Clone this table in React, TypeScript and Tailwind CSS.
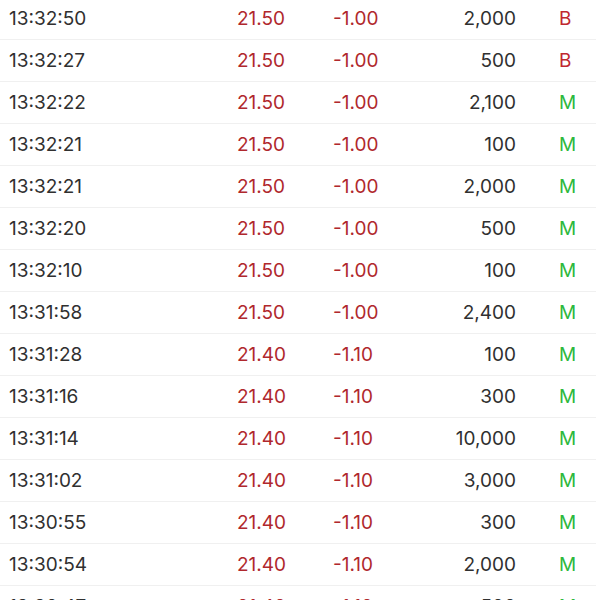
import React from "react";

type Row = { t: string; p: string; c: string; v: string; k: "B" | "M" };

const rows: Row[] = [
  { t: "13:32:50", p: "21.50", c: "-1.00", v: "2,000", k: "B" },
  { t: "13:32:27", p: "21.50", c: "-1.00", v: "500", k: "B" },
  { t: "13:32:22", p: "21.50", c: "-1.00", v: "2,100", k: "M" },
  { t: "13:32:21", p: "21.50", c: "-1.00", v: "100", k: "M" },
  { t: "13:32:21", p: "21.50", c: "-1.00", v: "2,000", k: "M" },
  { t: "13:32:20", p: "21.50", c: "-1.00", v: "500", k: "M" },
  { t: "13:32:10", p: "21.50", c: "-1.00", v: "100", k: "M" },
  { t: "13:31:58", p: "21.50", c: "-1.00", v: "2,400", k: "M" },
  { t: "13:31:28", p: "21.40", c: "-1.10", v: "100", k: "M" },
  { t: "13:31:16", p: "21.40", c: "-1.10", v: "300", k: "M" },
  { t: "13:31:14", p: "21.40", c: "-1.10", v: "10,000", k: "M" },
  { t: "13:31:02", p: "21.40", c: "-1.10", v: "3,000", k: "M" },
  { t: "13:30:55", p: "21.40", c: "-1.10", v: "300", k: "M" },
  { t: "13:30:54", p: "21.40", c: "-1.10", v: "2,000", k: "M" },
  { t: "13:30:47", p: "21.40", c: "-1.10", v: "500", k: "M" },
];

export default function App() {
  return (
    <div className="w-[600px] h-[600px] overflow-hidden bg-white [font-family:Inter,'Liberation_Sans',sans-serif] text-[19px] text-[#303030]">
      <div className="-mt-[2px] flex flex-col">
        {rows.map((r, i) => (
          <div
            key={i}
            className="flex items-center h-[42px] pt-[2px] border-b border-[#f0f0f0] pl-[9px] mr-[4px]"
          >
            <div className="w-[228px]">{r.t}</div>
            <div className="w-[96px] text-[#b0282d]">{r.p}</div>
            <div className="w-[100px] text-[#b0282d]">{r.c}</div>
            <div className="w-[83px] text-right">{r.v}</div>
            <div
              className={
                "pl-[43px] " +
                (r.k === "B" ? "text-[#c0282f]" : "text-[#2db83d]")
              }
            >
              {r.k}
            </div>
          </div>
        ))}
      </div>
    </div>
  );
}
